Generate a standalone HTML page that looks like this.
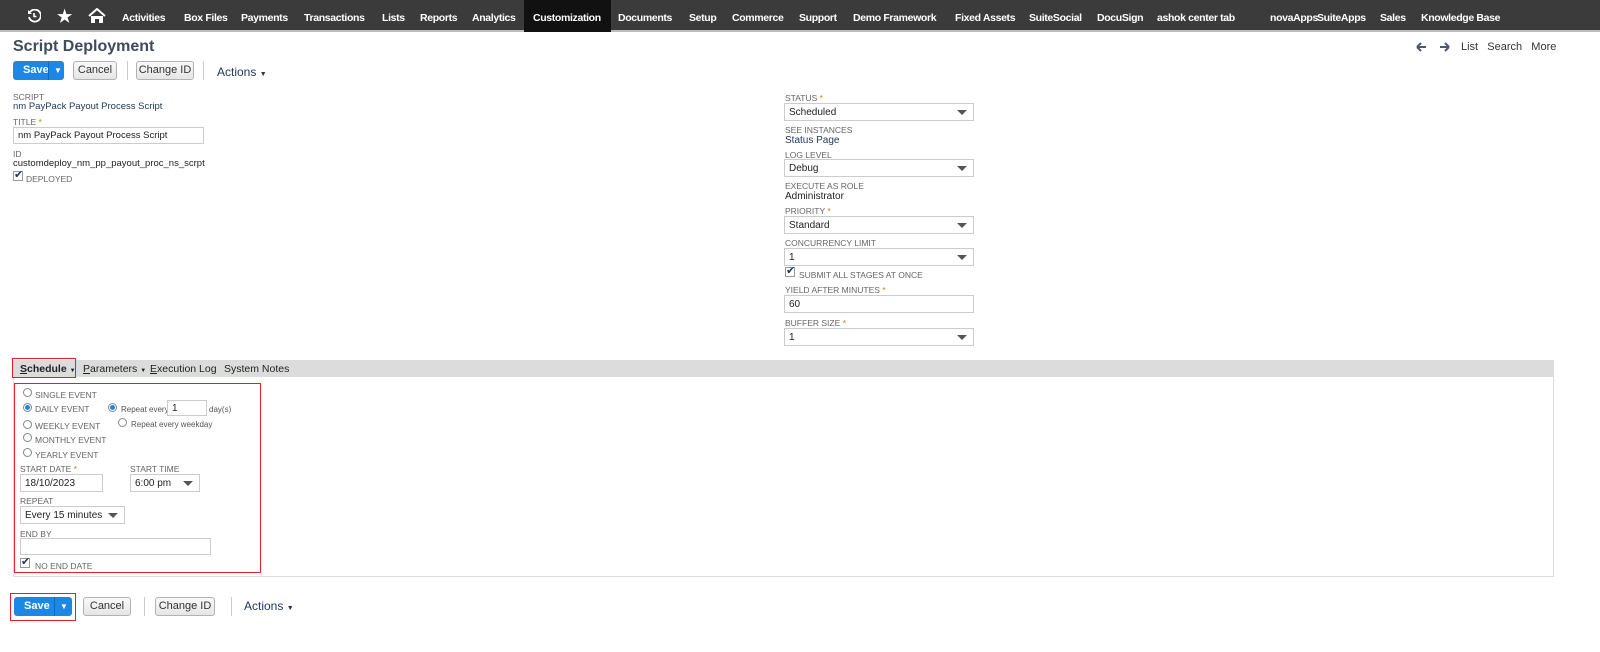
<!DOCTYPE html>
<html><head><meta charset="utf-8"><style>
*{margin:0;padding:0;box-sizing:border-box}
body{width:1600px;height:652px;background:#fff;font-family:"Liberation Sans",Arial,sans-serif;position:relative;overflow:hidden;font-size:11px;color:#222}
.a{position:absolute;white-space:nowrap}
#nav{position:absolute;left:0;top:0;width:1600px;height:32px;background:#3b3b3b;border-bottom:2px solid #bdbdbd}
#nav .a{color:#fff;font-weight:bold;font-size:10.5px;letter-spacing:-0.35px;top:12px}
.lbl{color:#666;font-size:8.5px;text-transform:uppercase}
.req{color:#e07c00}
.link{color:#24385b}
.inp{position:absolute;border:1px solid #ccc;background:#fff;height:18px;font-size:10px;padding:0 4px;color:#222;display:flex;align-items:center}
.sel:after{content:"";position:absolute;right:6px;top:6px;border-left:5px solid transparent;border-right:5px solid transparent;border-top:5px solid #555}
.btn{position:absolute;height:19px;border:1px solid #b2b2b2;background:linear-gradient(#fafafa,#e5e5e5);border-radius:3px;font-size:11px;text-align:center;line-height:17px;color:#333}
.save{position:absolute;height:19px;background:#1d87e5;border-radius:3px;color:#fff;font-weight:bold;font-size:11px;line-height:19px}
.cb{position:absolute;width:10px;height:10px;border:1px solid #999;background:#fff}
.cb:after{content:"✔";position:absolute;left:0;top:-4px;color:#24385b;font-size:11px}
.rd{position:absolute;width:9px;height:9px;border:1px solid #888;border-radius:50%;background:#fff}
.rd.on:after{content:"";position:absolute;left:1px;top:1px;width:5px;height:5px;border-radius:50%;background:#1d87e5}
.red{position:absolute;border:1.5px solid #e0202a}
</style></head><body>
<div id="nav">
<svg class="a" style="left:27px;top:9px" width="14" height="14" viewBox="0 0 14 14"><path d="M3 3 A6 6 0 1 1 2 8" fill="none" stroke="#fff" stroke-width="1.8"/><path d="M7 4v3.5h2.5" stroke="#fff" stroke-width="1.6" fill="none"/><path d="M1 1v4h4" fill="#fff"/></svg>
<div class="a" style="left:57px;top:7px;font-size:17px;color:#fff">★</div>
<svg class="a" style="left:88px;top:8px" width="18" height="16" viewBox="0 0 18 16"><path d="M1 8L9 1l8 7" fill="none" stroke="#fff" stroke-width="2"/><path d="M3 8v7h4v-4h4v4h4V8" fill="#fff"/></svg>
<div style="position:absolute;left:524px;top:0;width:87px;height:32px;background:#111"></div>
<div class="a" style="left:122px">Activities</div><div class="a" style="left:184px">Box Files</div><div class="a" style="left:241px">Payments</div><div class="a" style="left:304px">Transactions</div><div class="a" style="left:382px">Lists</div><div class="a" style="left:420px">Reports</div><div class="a" style="left:472px">Analytics</div><div class="a" style="left:533px">Customization</div><div class="a" style="left:618px">Documents</div><div class="a" style="left:689px">Setup</div><div class="a" style="left:732px">Commerce</div><div class="a" style="left:799px">Support</div><div class="a" style="left:853px">Demo Framework</div><div class="a" style="left:955px">Fixed Assets</div><div class="a" style="left:1029px">SuiteSocial</div><div class="a" style="left:1097px">DocuSign</div><div class="a" style="left:1157px">ashok center tab</div><div class="a" style="left:1270px">novaApps</div><div class="a" style="left:1317px">SuiteApps</div><div class="a" style="left:1380px">Sales</div><div class="a" style="left:1421px">Knowledge Base</div>
</div>
<div class="a" style="left:13px;top:38px;font-size:16px;font-weight:bold;color:#3f4a5a">Script Deployment</div>
<svg class="a" style="left:1416px;top:42px" width="36" height="10" viewBox="0 0 36 10"><path d="M1 5h9M1 5l4-4M1 5l4 4" stroke="#4a5a6e" stroke-width="2" fill="none"/><path d="M24 5h9M33 5l-4-4M33 5l-4 4" stroke="#4a5a6e" stroke-width="2" fill="none"/></svg>
<div class="a" style="left:1461px;top:41px;font-size:11px;color:#333">List&nbsp;&nbsp;&nbsp;Search&nbsp;&nbsp;&nbsp;More</div>

<div class="save" style="left:13px;top:61px;width:51px"><span style="margin-left:10px">Save</span><span style="position:absolute;left:35px;top:0;height:19px;border-left:1px solid #0f6bc0;padding-left:5px;font-size:8px">▼</span></div>
<div class="btn" style="left:73px;top:61px;width:44px">Cancel</div>
<div style="position:absolute;left:127px;top:61px;width:1px;height:19px;background:#ccc"></div>
<div class="btn" style="left:136px;top:61px;width:58px">Change ID</div>
<div style="position:absolute;left:203px;top:61px;width:1px;height:19px;background:#ccc"></div>
<div class="a link" style="left:217px;top:65px;font-size:12px">Actions <span style="font-size:7px">▼</span></div>

<div class="a lbl" style="left:13px;top:92px">Script</div>
<div class="a link" style="left:13px;top:101px;font-size:9.5px">nm PayPack Payout Process Script</div>
<div class="a lbl" style="left:13px;top:117px">Title <span class="req">*</span></div>
<div class="inp" style="left:13px;top:127px;width:191px;height:17px;font-size:9.5px">nm PayPack Payout Process Script</div>
<div class="a lbl" style="left:13px;top:149px">ID</div>
<div class="a" style="left:13px;top:158px;font-size:9.5px">customdeploy_nm_pp_payout_proc_ns_scrpt</div>
<div class="cb" style="left:13px;top:171px"></div>
<div class="a lbl" style="left:26px;top:174px">Deployed</div>

<div class="a lbl" style="left:785px;top:93px">Status <span class="req">*</span></div>
<div class="inp sel" style="left:784px;top:103px;width:190px">Scheduled</div>
<div class="a lbl" style="left:785px;top:125px">See Instances</div>
<div class="a link" style="left:785px;top:135px;font-size:10px">Status Page</div>
<div class="a lbl" style="left:785px;top:150px">Log Level</div>
<div class="inp sel" style="left:784px;top:159px;width:190px">Debug</div>
<div class="a lbl" style="left:785px;top:181px">Execute as Role</div>
<div class="a" style="left:785px;top:191px;font-size:10px">Administrator</div>
<div class="a lbl" style="left:785px;top:206px">Priority <span class="req">*</span></div>
<div class="inp sel" style="left:784px;top:216px;width:190px">Standard</div>
<div class="a lbl" style="left:785px;top:238px">Concurrency Limit</div>
<div class="inp sel" style="left:784px;top:248px;width:190px">1</div>
<div class="cb" style="left:785px;top:267px"></div>
<div class="a lbl" style="left:799px;top:270px">Submit all stages at once</div>
<div class="a lbl" style="left:785px;top:285px">Yield After Minutes <span class="req">*</span></div>
<div class="inp" style="left:784px;top:295px;width:190px">60</div>
<div class="a lbl" style="left:785px;top:318px">Buffer Size <span class="req">*</span></div>
<div class="inp sel" style="left:784px;top:328px;width:190px">1</div>

<div style="position:absolute;left:13px;top:360px;width:1541px;height:17px;background:#dcdcdc"></div>
<div style="position:absolute;left:13px;top:377px;width:1541px;height:200px;border:1px solid #ddd;border-top:none"></div>
<div class="a" style="left:20px;top:363px;font-size:10.5px;font-weight:bold;color:#222"><u>S</u>chedule <span style="font-size:6px">▼</span></div>
<div class="a" style="left:83px;top:363px;font-size:10.5px"><u>P</u>arameters <span style="font-size:6px">▼</span></div>
<div class="a" style="left:150px;top:363px;font-size:10.5px"><u>E</u>xecution Log</div>
<div class="a" style="left:224px;top:363px;font-size:10.5px">System Notes</div>
<div class="red" style="left:12px;top:358px;width:64px;height:20px"></div>
<div class="red" style="left:14px;top:383px;width:247px;height:190px"></div>

<div class="rd" style="left:23px;top:388px"></div><div class="a lbl" style="left:35px;top:390px">Single Event</div>
<div class="rd on" style="left:23px;top:403px"></div><div class="a lbl" style="left:35px;top:404px">Daily Event</div>
<div class="rd on" style="left:108px;top:403px"></div><div class="a" style="left:121px;top:405px;font-size:8px;color:#555">Repeat every</div>
<div class="inp" style="left:167px;top:400px;width:40px;height:16px">1</div>
<div class="a" style="left:209px;top:405px;font-size:8px;color:#555">day(s)</div>
<div class="rd" style="left:23px;top:420px"></div><div class="a lbl" style="left:35px;top:421px">Weekly Event</div>
<div class="rd" style="left:118px;top:418px"></div><div class="a" style="left:131px;top:420px;font-size:8px;color:#555">Repeat every weekday</div>
<div class="rd" style="left:23px;top:433px"></div><div class="a lbl" style="left:35px;top:435px">Monthly Event</div>
<div class="rd" style="left:23px;top:448px"></div><div class="a lbl" style="left:35px;top:450px">Yearly Event</div>
<div class="a lbl" style="left:20px;top:464px">Start Date <span class="req">*</span></div>
<div class="inp" style="left:20px;top:474px;width:83px">18/10/2023</div>
<div class="a lbl" style="left:130px;top:464px">Start Time</div>
<div class="inp sel" style="left:130px;top:474px;width:70px">6:00 pm</div>
<div class="a lbl" style="left:20px;top:496px">Repeat</div>
<div class="inp sel" style="left:20px;top:506px;width:105px">Every 15 minutes</div>
<div class="a lbl" style="left:20px;top:529px">End By</div>
<div class="inp" style="left:20px;top:538px;width:191px;height:17px"></div>
<div class="cb" style="left:20px;top:558px"></div>
<div class="a lbl" style="left:35px;top:561px">No End Date</div>

<div class="red" style="left:10px;top:593px;width:66px;height:28px"></div>
<div class="save" style="left:14px;top:597px;width:58px"><span style="margin-left:10px">Save</span><span style="position:absolute;left:40px;top:0;height:19px;border-left:1px solid #0f6bc0;padding-left:5px;font-size:8px">▼</span></div>
<div class="btn" style="left:83px;top:597px;width:48px">Cancel</div>
<div style="position:absolute;left:144px;top:597px;width:1px;height:19px;background:#ccc"></div>
<div class="btn" style="left:155px;top:597px;width:60px">Change ID</div>
<div style="position:absolute;left:231px;top:597px;width:1px;height:19px;background:#ccc"></div>
<div class="a link" style="left:244px;top:599px;font-size:12px">Actions <span style="font-size:7px">▼</span></div>
</body></html>
